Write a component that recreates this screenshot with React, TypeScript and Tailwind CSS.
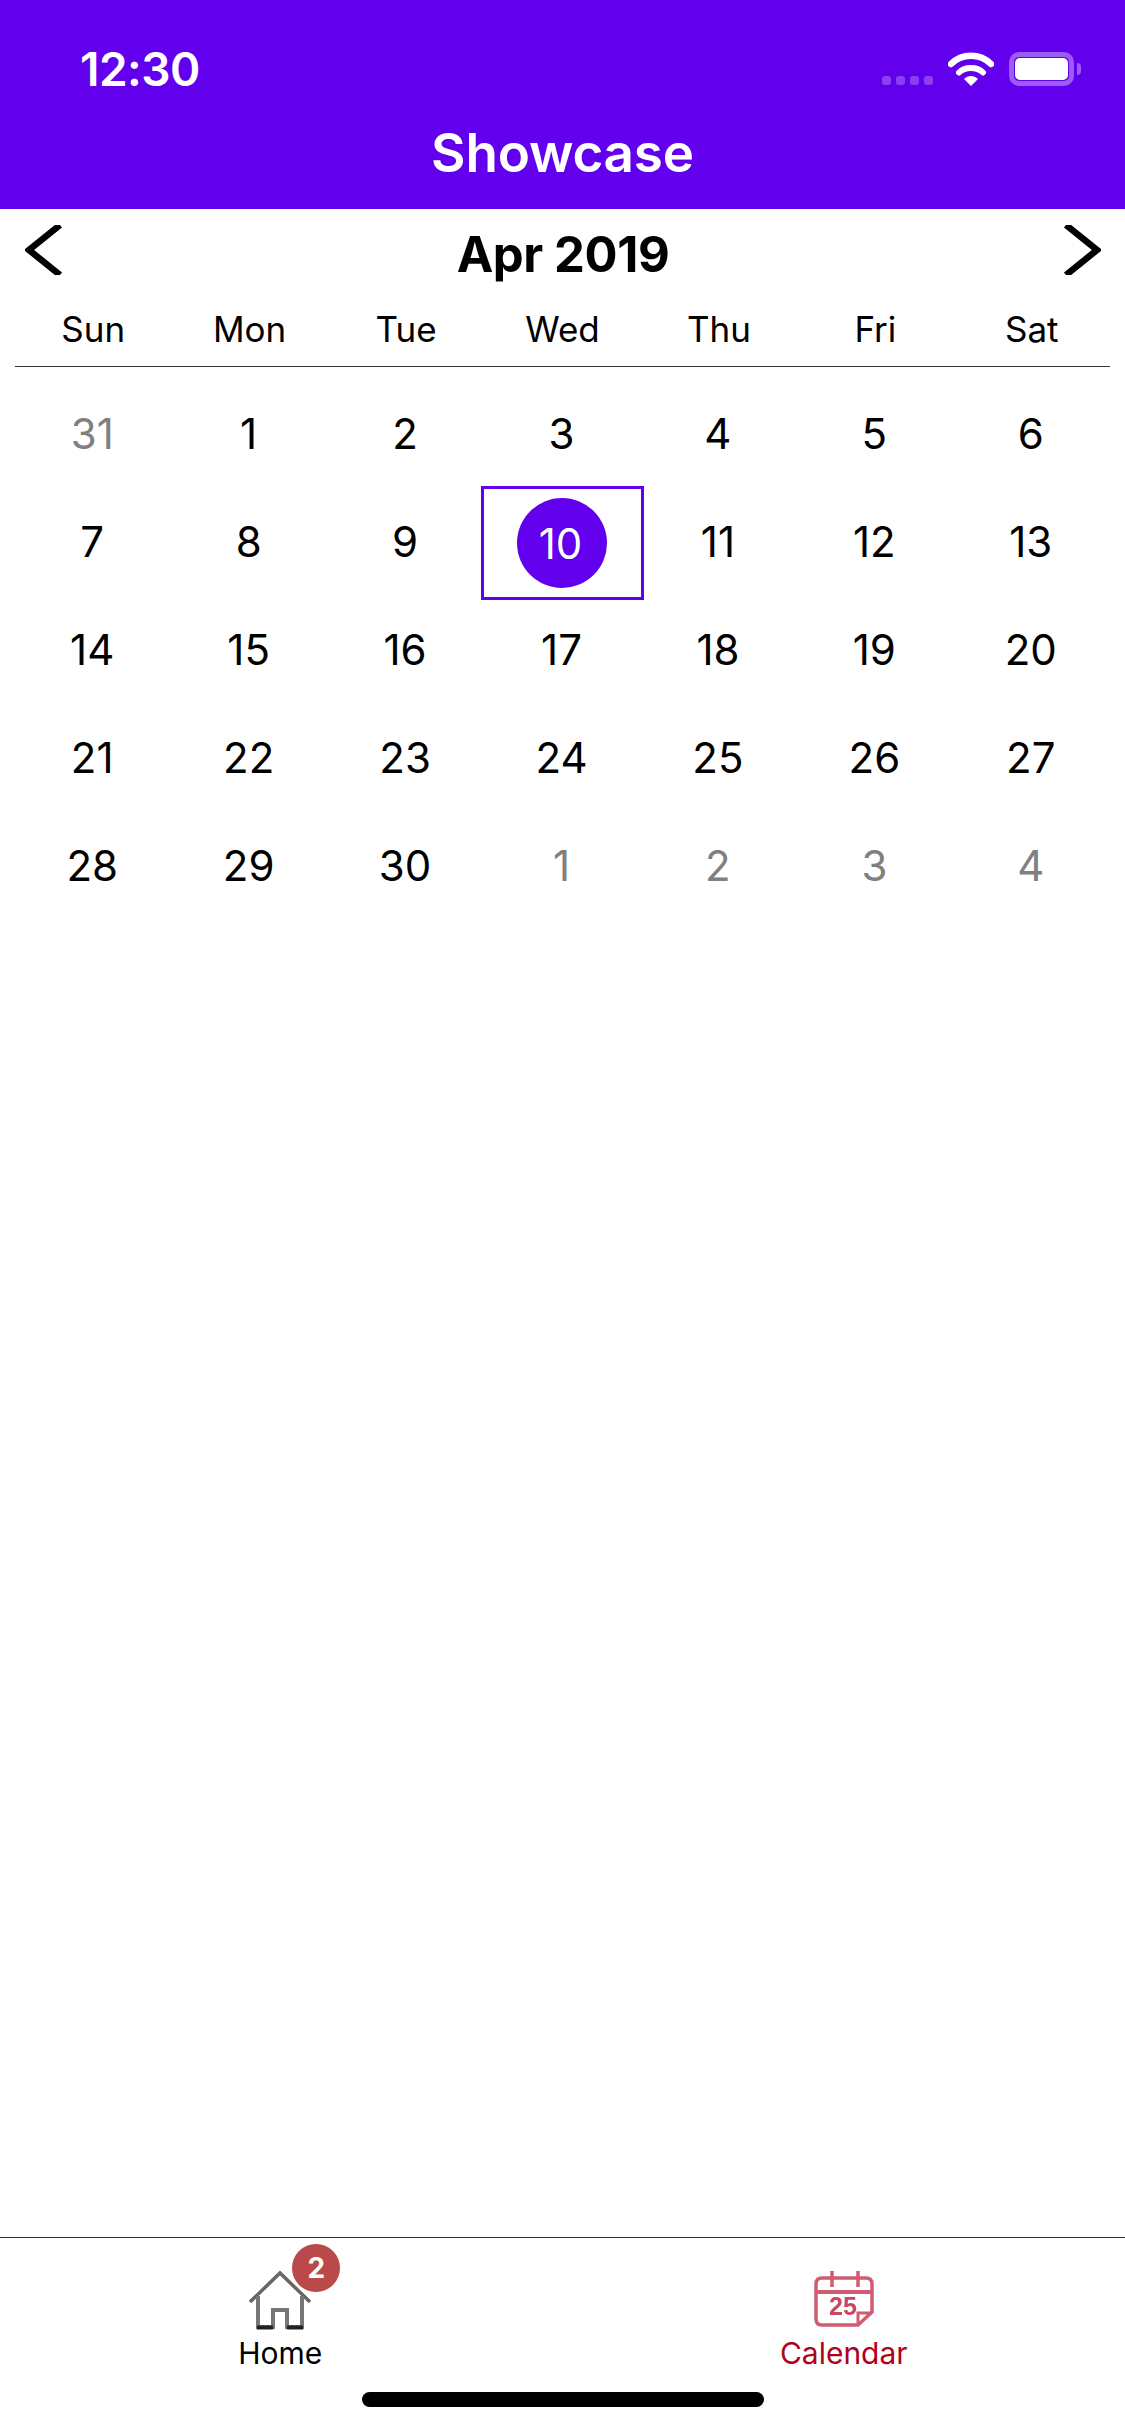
const days: { d: number; muted?: boolean; sel?: boolean }[][] = [
  [{ d: 31, muted: true }, { d: 1 }, { d: 2 }, { d: 3 }, { d: 4 }, { d: 5 }, { d: 6 }],
  [{ d: 7 }, { d: 8 }, { d: 9 }, { d: 10, sel: true }, { d: 11 }, { d: 12 }, { d: 13 }],
  [{ d: 14 }, { d: 15 }, { d: 16 }, { d: 17 }, { d: 18 }, { d: 19 }, { d: 20 }],
  [{ d: 21 }, { d: 22 }, { d: 23 }, { d: 24 }, { d: 25 }, { d: 26 }, { d: 27 }],
  [{ d: 28 }, { d: 29 }, { d: 30 }, { d: 1, muted: true }, { d: 2, muted: true }, { d: 3, muted: true }, { d: 4, muted: true }],
];
const week = ["Sun", "Mon", "Tue", "Wed", "Thu", "Fri", "Sat"];

function Wifi() {
  return (
    <svg width="46" height="34" viewBox="0 0 46 34" fill="none">
      <path d="M3 12 C14 1 32 1 43 12" stroke="#fff" strokeWidth="6.5" strokeLinecap="round" />
      <path d="M11 20.5 C17 14.5 29 14.5 35 20.5" stroke="#fff" strokeWidth="6" strokeLinecap="round" />
      <path d="M16 27 C20 23 26 23 30 27 L23 34 Z" fill="#fff" />
    </svg>
  );
}

function Chevron({ right }: { right?: boolean }) {
  return (
    <svg width="38" height="50" viewBox="0 0 38 50" fill="none">
      <path d={right ? "M3 0 L34 25 L3 50" : "M35 0 L4 25 L35 50"} stroke="#000" strokeWidth="6.5" />
    </svg>
  );
}

function HomeIcon() {
  return (
    <svg width="62" height="60" viewBox="0 0 62 60" fill="none" stroke="#777" strokeWidth="4" className="blur-[0.6px]">
      <path d="M1 32 L31 3 L61 32" strokeWidth="3.5" stroke="#666" />
      <path d="M9 26 V57 H24 V40 H38 V57 H53 V26" />
      <path d="M8 57.5 H24 M38 57.5 H54" stroke="#222" />
    </svg>
  );
}

function CalendarIcon() {
  return (
    <svg width="60" height="60" viewBox="0 0 60 60" fill="none" stroke="#cf5c70" strokeWidth="3.5" className="blur-[0.5px]">
      <path d="M44 55 H8 Q2 55 2 49 V14 Q2 8 8 8 H52 Q58 8 58 14 V42 L44 55 Z" />
      <path d="M2 22 H58" strokeWidth="4" />
      <path d="M18 1 V17 M44 1 V17" />
      <path d="M44 55 V43 H58" strokeWidth="3" />
      <text x="15" y="45" fontSize="25" fontWeight="700" fill="#c9475f" stroke="none" fontFamily="Liberation Sans">25</text>
    </svg>
  );
}

export default function App() {
  return (
    <div className="relative flex h-[2436px] w-[1125px] flex-col bg-white font-['Inter',sans-serif] text-black">
      <header className="h-[209px] bg-[#6200ee] text-white">
        <div className="flex h-[123px] items-start justify-between pt-[45px] pl-[80px] pr-[44px]">
          <span className="text-[46px] leading-[48px] font-semibold tracking-[-0.5px]">12:30</span>
          <div className="flex items-end pt-[7px]">
            <div className="mb-[1px] flex gap-[5px]">
              <i className="h-[9px] w-[9px] rounded-[3px] bg-[#8a40f2]" />
              <i className="h-[9px] w-[9px] rounded-[3px] bg-[#8a40f2]" />
              <i className="h-[9px] w-[9px] rounded-[3px] bg-[#8a40f2]" />
              <i className="h-[9px] w-[9px] rounded-[3px] bg-[#8a40f2]" />
            </div>
            <div className="ml-[15px] mr-[15px] h-[34px]"><Wifi /></div>
            <div className="flex items-center">
              <div className="h-[34px] w-[65px] rounded-[10px] border-[5px] border-[#9a5cf4] p-[1px]">
                <div className="h-full w-full rounded-[5px] bg-white" />
              </div>
              <div className="ml-[3px] h-[12px] w-[4px] rounded-r-full bg-[#9a5cf4]" />
            </div>
          </div>
        </div>
        <h1 className="text-center text-[53px] leading-[60px] font-semibold tracking-[-0.2px]">Showcase</h1>
      </header>

      <main className="flex-1 px-[15px]">
        <div className="flex h-[95px] items-start justify-between pt-[16px] pl-[10px] pr-[9px]">
          <Chevron />
          <span className="mt-[1px] text-[49px] leading-[58px] font-bold tracking-[-0.4px]">Apr 2019</span>
          <Chevron right />
        </div>
        <div className="grid h-[63px] grid-cols-7 border-b-[1.5px] border-[#333] pb-[9px]">
          {week.map((w) => (
            <div key={w} className="text-center text-[35px] leading-[50px]">{w}</div>
          ))}
        </div>
        <div className="mt-[14px]">
          {days.map((row, i) => (
            <div key={i} className="grid h-[108px] grid-cols-7">
              {row.map((c, j) => (
                <div key={j} className="flex items-center justify-center">
                  {c.sel ? (
                    <div className="-my-[3px] flex h-[114px] w-[163px] flex-none items-center justify-center border-[3px] border-[#6200ee]">
                      <div className="flex h-[90px] w-[90px] -translate-x-[1px] items-center justify-center rounded-full bg-[#6200ee] pr-[2px] text-[42px] text-white">{c.d}</div>
                    </div>
                  ) : (
                    <span className={c.muted ? "-mt-[3px] pr-[2px] text-[42px] text-[#808080]" : "-mt-[3px] pr-[2px] text-[42px]"}>{c.d}</span>
                  )}
                </div>
              ))}
            </div>
          ))}
        </div>
      </main>

      <nav className="flex h-[199px] border-t-[1.5px] border-[#333]">
        <div className="flex w-1/2 -translate-x-[1px] flex-col items-center pt-[32px]">
          <div className="relative h-[60px] w-[62px]">
            <HomeIcon />
            <div className="absolute -top-[26px] left-[43px] flex h-[48px] w-[48px] items-center justify-center rounded-full bg-[#ba4a4a] text-[28px] font-bold text-white">2</div>
          </div>
          <span className="mt-[5px] text-[30px] leading-[36px]">Home</span>
        </div>
        <div className="flex w-1/2 flex-col items-center pt-[32px] text-[#b00020]">
          <CalendarIcon />
          <span className="mt-[5px] text-[30px] leading-[36px]">Calendar</span>
        </div>
      </nav>
      <div className="absolute bottom-[29px] left-[362px] h-[15px] w-[402px] rounded-full bg-black" />
    </div>
  );
}
